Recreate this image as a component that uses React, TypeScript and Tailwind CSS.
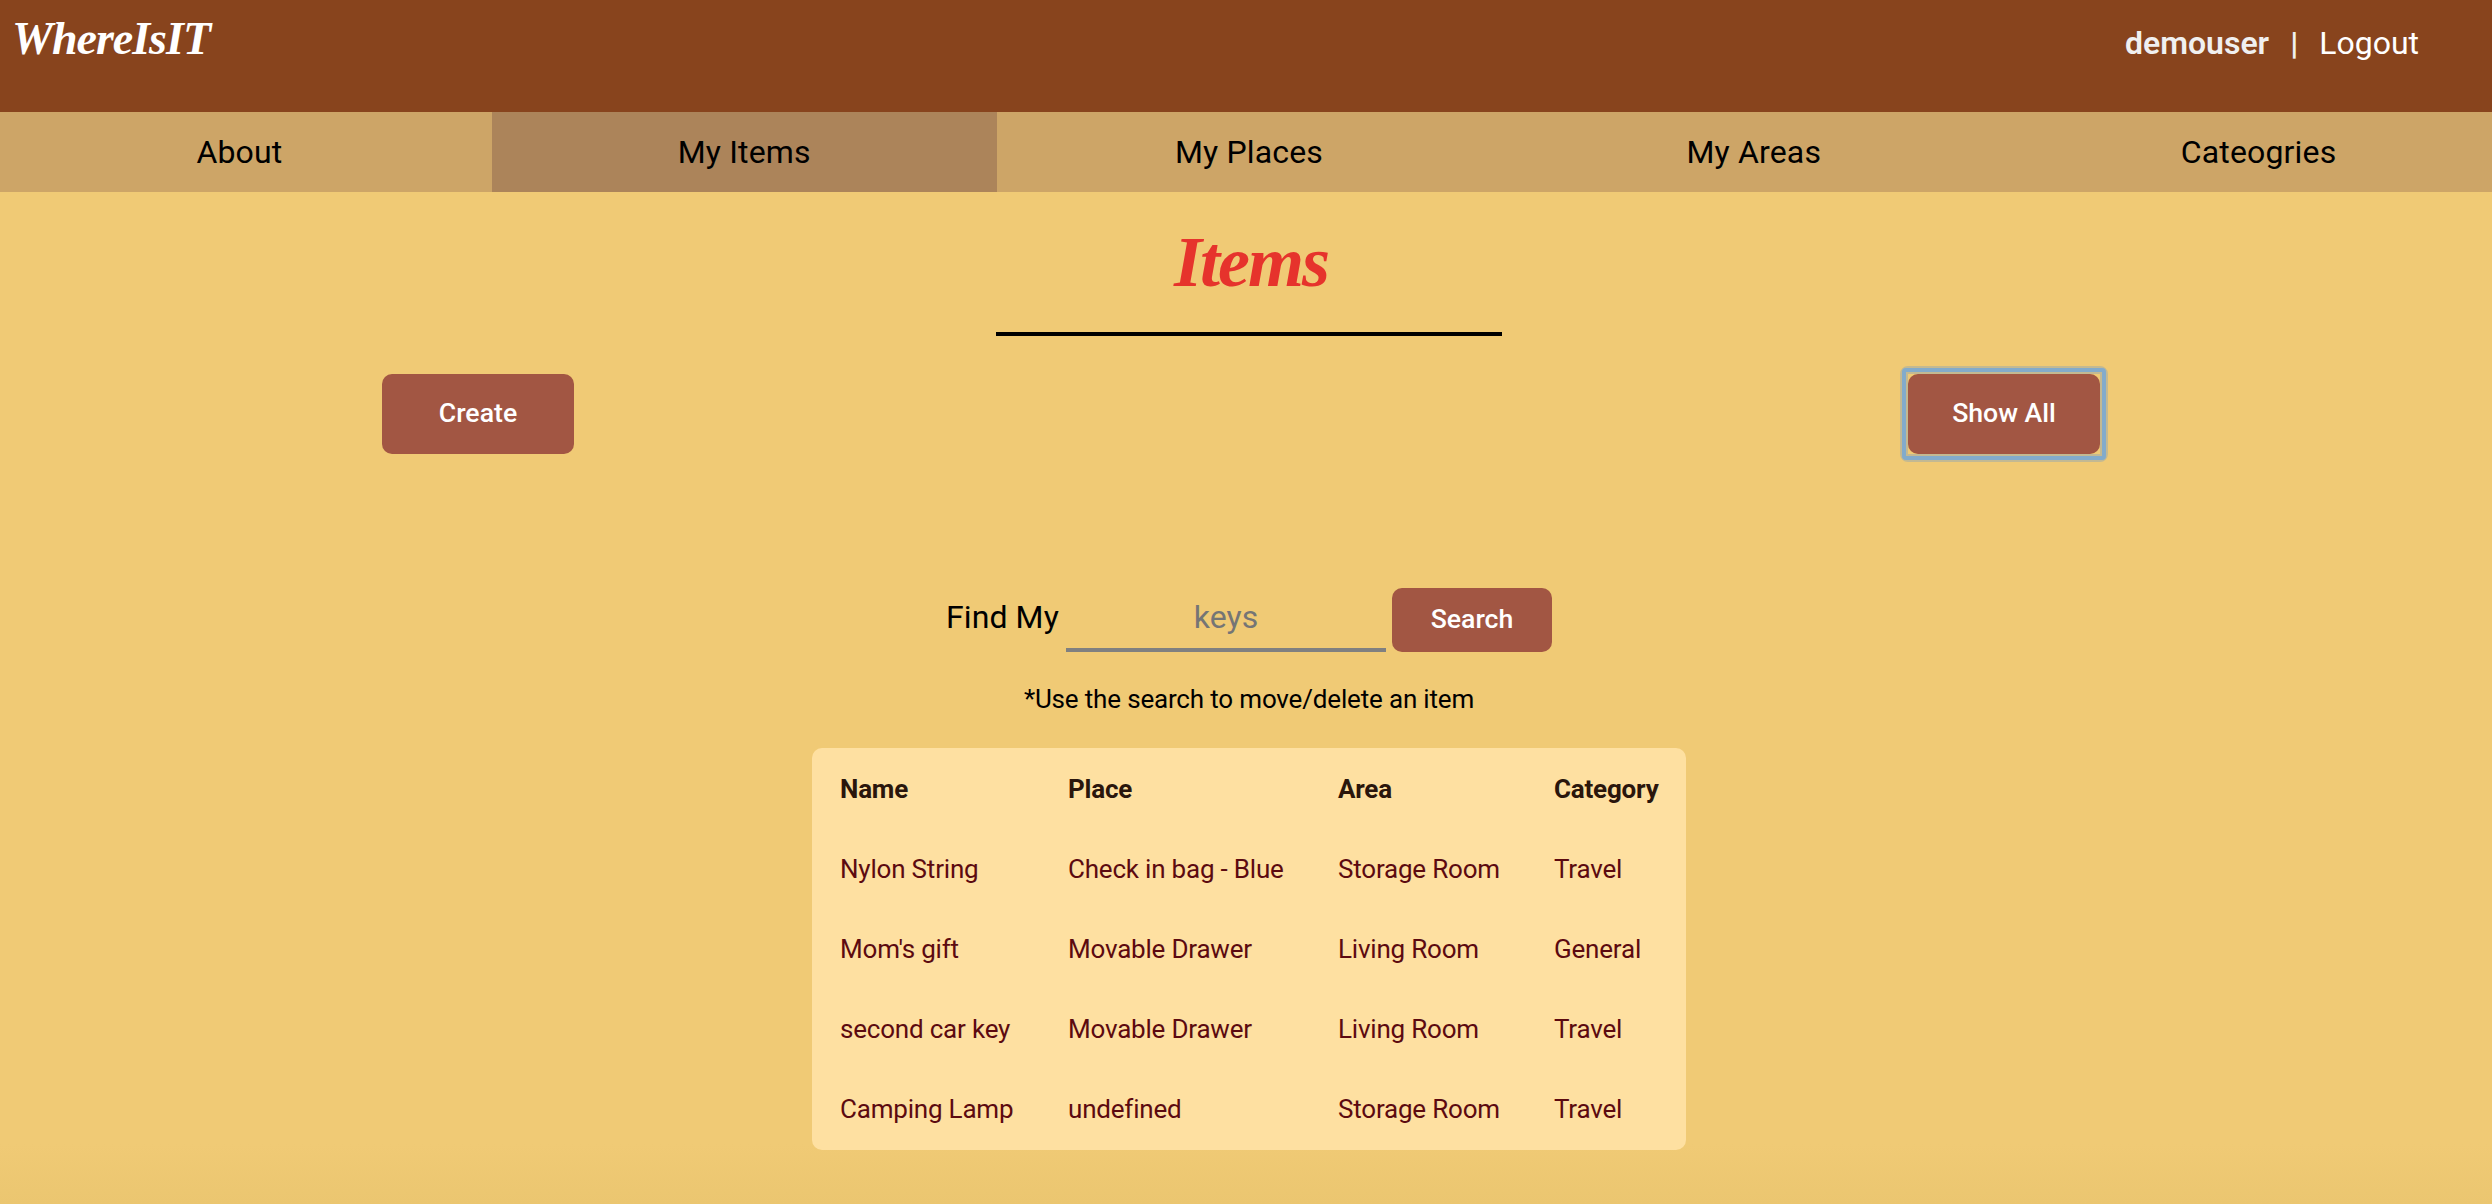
const tabs = ['About', 'My Items', 'My Places', 'My Areas', 'Cateogries'];

const items = [
  ['Nylon String', 'Check in bag - Blue', 'Storage Room', 'Travel'],
  ["Mom's gift", 'Movable Drawer', 'Living Room', 'General'],
  ['second car key', 'Movable Drawer', 'Living Room', 'Travel'],
  ['Camping Lamp', 'undefined', 'Storage Room', 'Travel'],
];

const columns = 'grid grid-cols-[228px_270px_216px_auto] h-20 items-center pl-7';
const button =
  'rounded-[10px] bg-[#a25643] pb-[2px] text-[26.67px] font-medium text-white';

export default function App() {
  return (
    <div className="flex h-[1204px] w-full flex-col overflow-hidden bg-[#f0ca75] bg-[linear-gradient(to_top,#ebc670,#f0ca75_60px)] font-[Roboto,sans-serif] text-black">
      <header className="flex h-28 shrink-0 justify-between bg-[#88441d] pl-3 pr-[73px] text-white">
        <div className="pt-2.5 font-['Liberation_Serif',serif] text-[46px] leading-[58px] font-bold italic tracking-[-1px]">
          WhereIsIT
        </div>
        <div className="flex h-[86px] items-center text-[32px]">
          <span className="font-semibold text-[#f0f0f0]">demouser</span>
          <span className="mx-[21px] font-bold text-[#f0f0f0]">|</span>
          <span>Logout</span>
        </div>
      </header>

      <nav className="h-20 shrink-0 overflow-hidden bg-[#cda567]">
        <div className="-ml-[13px] flex h-20 w-[2524px]">
          {tabs.map((tab, i) => (
            <a
              key={tab}
              className={`flex flex-1 items-center justify-center text-[32px] tracking-[0.15px] ${i === 1 ? 'bg-[#ac845a]' : ''}`}
            >
              {tab}
            </a>
          ))}
        </div>
      </nav>

      <main className="-ml-[13px] flex w-[2524px] flex-col items-center">
        <h1 className="h-[144px] w-[506px] border-b-4 border-black pt-[30px] pl-1 text-center font-['Liberation_Serif',serif] text-[72px] leading-[80px] font-bold italic tracking-[-2px] text-[#e6332c]">
          Items
        </h1>

        <div className="mt-[38px] flex w-full justify-between pl-[395px] pr-[411px]">
          <button className={`h-20 w-48 ${button}`}>Create</button>
          <div className="relative">
            <div className="absolute -inset-2 rounded-[8px] border-2 border-[#c3b992] bg-[#f0ca75]">
              <div className="h-full w-full rounded-[4px] border-4 border-[#83abcb]">
                <div className="h-full w-full border-2 border-[#c3b992]" />
              </div>
            </div>
            <button className={`relative h-20 w-48 ${button}`}>Show All</button>
          </div>
        </div>

        <div className="mt-[134px] flex h-16">
          <label className="w-[120px] pt-[9px] text-[32px] leading-[40px] tracking-[0.1px]">Find My</label>
          <input
            placeholder="keys"
            className="h-16 w-80 border-b-4 border-[#808080] bg-transparent pb-[3px] text-center text-[32px] outline-none placeholder:text-[#757575]"
          />
          <button className={`ml-1.5 h-16 w-40 ${button}`}>Search</button>
        </div>

        <p className="mt-[29px] text-[26px] leading-[36px] tracking-[-0.17px]">
          *Use the search to move/delete an item
        </p>

        <section className="mt-[31px] h-[402px] w-[874px] rounded-[10px] bg-[#fee0a1] pt-px text-[26px] tracking-[-0.2px]">
          <div className={`${columns} font-bold text-[#2a160c]`}>
            <span>Name</span>
            <span>Place</span>
            <span>Area</span>
            <span>Category</span>
          </div>
          {items.map((row) => (
            <div key={row[0]} className={`${columns} text-[#5c0a10]`}>
              {row.map((cell, i) => (
                <span key={i}>{cell}</span>
              ))}
            </div>
          ))}
        </section>
      </main>
    </div>
  );
}
